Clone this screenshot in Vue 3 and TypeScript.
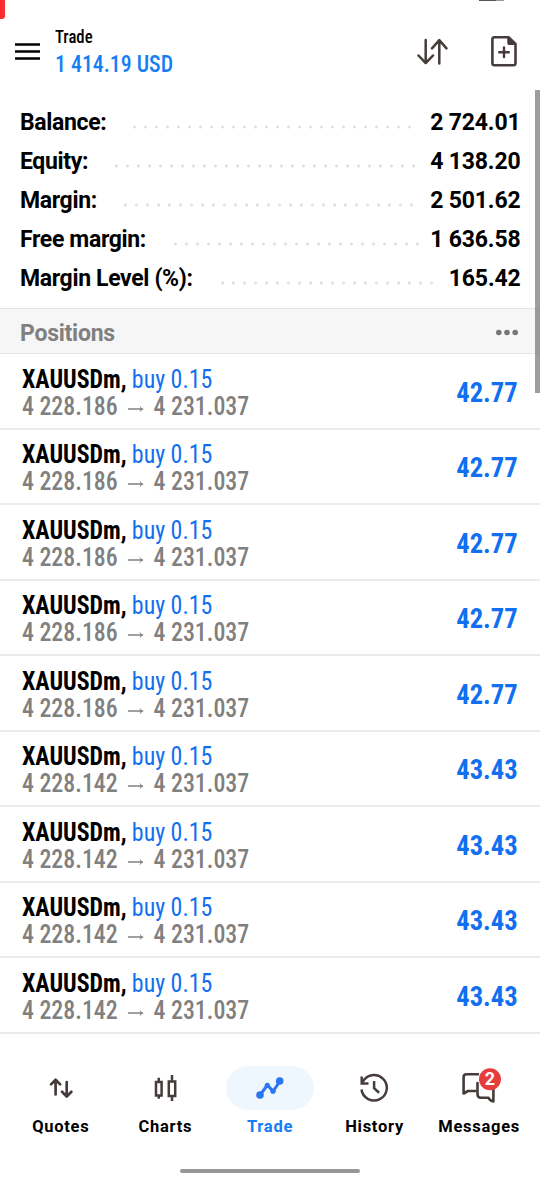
<script setup lang="ts">
interface Summary { label: string; value: string; start: number; dots: number }
interface Position { symbol: string; side: string; from: string; to: string; profit: string }

const summary: Summary[] = [
  { label: 'Balance:', value: '2 724.01', start: 129, dots: 26 },
  { label: 'Equity:', value: '4 138.20', start: 111, dots: 28 },
  { label: 'Margin:', value: '2 501.62', start: 120, dots: 27 },
  { label: 'Free margin:', value: '1 636.58', start: 170, dots: 23 },
  { label: 'Margin Level (%):', value: '165.42', start: 217, dots: 20 },
]

const positions: Position[] = Array.from({ length: 9 }, (_, i) => ({
  symbol: 'XAUUSDm,',
  side: 'buy 0.15',
  from: i < 5 ? '4 228.186' : '4 228.142',
  to: '4 231.037',
  profit: i < 5 ? '42.77' : '43.43',
}))
</script>

<template>
  <div class="screen">
    <div class="corner-mark"></div>
    <div class="notch-mark"></div>
    <header class="topbar">
      <svg class="menu" width="26" height="18" viewBox="0 0 26 18"><path d="M0 1.5H25M0 8.5H25M0 15.5H25" stroke="#000" stroke-width="2.4" /></svg>
      <div class="titles">
        <div class="title cond">Trade</div>
        <div class="amount cond">1 414.19 USD</div>
      </div>
      <svg class="sort" width="32" height="28" viewBox="0 0 32 28" fill="none" stroke="#453c3b" stroke-width="2.5" stroke-linecap="round" stroke-linejoin="round">
        <path d="M9.7 2V25M2.5 17.5L9.7 25.2L17 17.5M23.3 25.5V2.5M16 10.3L23.3 2.2L30.5 10.3" />
      </svg>
      <svg class="newdoc" width="26" height="32" viewBox="0 0 26 32" fill="none" stroke="#453c3b" stroke-width="2.6" stroke-linecap="round" stroke-linejoin="round">
        <path d="M3.5 2.2H17.5L24.5 9V28Q24.5 30.2 22.5 30.2H3.5Q1.4 30.2 1.4 28V4.3Q1.4 2.2 3.5 2.2Z" />
        <path d="M17 2.5V7.5Q17 9.3 18.8 9.3H24Z" fill="#453c3b" stroke-width="1.5" />
        <path d="M13 12.5V22M8.2 17.2H17.8" stroke-width="2.4" />
      </svg>
    </header>

    <section class="summary">
      <div v-for="s in summary" :key="s.label" class="srow">
        <span class="slabel" :style="{ width: s.start - 20 + 'px' }">{{ s.label }}</span>
        <span class="dots" :style="{ width: s.dots * 11 + 'px' }"></span>
        <span class="svalue">{{ s.value }}</span>
      </div>
    </section>

    <div class="section-head">
      <span>Positions</span>
      <svg width="24" height="8" viewBox="0 0 24 8" fill="#777"><circle cx="3.8" cy="3.5" r="2.8" /><circle cx="12" cy="3.5" r="2.8" /><circle cx="20.2" cy="3.5" r="2.8" /></svg>
    </div>

    <main class="list">
      <div v-for="(p, i) in positions" :key="i" class="row">
        <div class="info">
          <div class="line"><span class="symbol cond">{{ p.symbol }}</span><span class="side cond">{{ p.side }}</span></div>
          <div class="line prices">
            <span class="price cond">{{ p.from }}</span>
            <svg class="arrow" width="17" height="10" viewBox="0 0 17 10" fill="none" stroke="#808080" stroke-width="1.5"><path d="M0 5H15" /><path d="M12 1.5Q13.5 4 16.5 5Q13.5 6 12 8.5L13.3 5Z" fill="#808080" stroke="none" /></svg>
            <span class="price cond">{{ p.to }}</span>
          </div>
        </div>
        <span class="profit cond">{{ p.profit }}</span>
      </div>
    </main>

    <nav class="tabs">
      <div class="tab">
        <div class="icon">
          <svg width="26" height="24" viewBox="0 0 26 24" fill="none" stroke="#453c3b" stroke-width="2.7" stroke-linecap="round" stroke-linejoin="round"><path d="M7.6 18.5V4M3 8.4L7.6 3.7L12.2 8.4M18.7 6V20M14 15.8L18.7 20.5L23.4 15.8" /></svg>
        </div>
        <span>Quotes</span>
      </div>
      <div class="tab">
        <div class="icon">
          <svg width="26" height="28" viewBox="0 0 26 28" fill="none" stroke="#453c3b" stroke-width="2.5"><path d="M4 8H9.6V21.4H4ZM6.8 3.8V8M6.8 21.4V24.8M16.8 7.5H23.2V22H16.8ZM20 1V7.5M20 22V27" /></svg>
        </div>
        <span>Charts</span>
      </div>
      <div class="tab active">
        <div class="icon pill">
          <svg width="30" height="26" viewBox="0 0 30 26" fill="#2b76ee" stroke="#2b76ee"><path d="M5 20L12.5 10L18 16.5L25 6" fill="none" stroke-width="3" stroke-linejoin="round" /><circle cx="5" cy="20" r="3.8" stroke="none" /><circle cx="12.3" cy="10.3" r="2.6" stroke="none" /><circle cx="18" cy="16.2" r="2.6" stroke="none" /><circle cx="24.7" cy="6" r="3.8" stroke="none" /></svg>
        </div>
        <span>Trade</span>
      </div>
      <div class="tab">
        <div class="icon">
          <svg width="30" height="30" viewBox="0.7 0 30 30" fill="none" stroke="#453c3b" stroke-width="2.5"><path d="M3.2 9.6A12.7 12.7 0 1 1 2.2 16.5" /><path d="M2.4 3.5V10.4H9.2" /><path d="M14.8 8V15.3L19.8 19.8" /></svg>
        </div>
        <span>History</span>
      </div>
      <div class="tab">
        <div class="icon">
          <svg width="44" height="40" viewBox="0 0 44 40">
            <g fill="none" stroke="#453c3b" stroke-width="2.6" stroke-linejoin="round" stroke-linecap="round">
              <path d="M21 6.2H9.5Q6.6 6.2 6.6 9.2V25.5L11 23H18.5" />
              <path d="M20.5 15V26Q20.5 29.8 24 29.8H31.5Q33 33 36.4 33.4V21" />
            </g>
            <circle cx="33" cy="11.2" r="11" fill="#e53c3c" />
            <text x="33" y="17.2" text-anchor="middle" class="badge">2</text>
          </svg>
        </div>
        <span>Messages</span>
      </div>
    </nav>
    <div class="homebar"></div>
    <div class="scrollbar"></div>
  </div>
</template>

<style>
body { margin: 0; background: #fff; }
</style>

<style scoped>
.screen { position: relative; width: 540px; height: 1182px; overflow: hidden; background: #fff; font-family: Roboto, "Liberation Sans", sans-serif; color: #000; }
.corner-mark { position: absolute; left: 0; top: 0; width: 5px; height: 19px; background: #ff2b2e; border-bottom-right-radius: 3px; }
.notch-mark { position: absolute; left: 479px; top: 0; width: 25px; height: 1px; background: linear-gradient(90deg, #555 68%, #999 68%); }
.cond { font-stretch: 75%; white-space: nowrap; }
.topbar { display: flex; height: 102px; box-sizing: border-box; padding: 25px 23px 0 15px; align-items: flex-start; }
.menu { margin-top: 18px; }
.titles { margin-left: 14px; flex: 1; }
.title, .amount { transform: scaleX(0.93); transform-origin: left; }
.title { font-size: 18px; line-height: 23px; font-weight: 500; }
.amount { font-size: 23.5px; line-height: 33px; color: #167ff5; font-weight: 500; }
.sort { margin-top: 13px; }
.newdoc { margin-left: 43px; margin-top: 10px; }
.srow { display: flex; height: 39px; padding: 0 19.5px 0 20px; line-height: 41px; font-size: 23px; font-weight: 700; white-space: nowrap; }
.slabel { letter-spacing: -0.35px; }
.dots { background: radial-gradient(circle at 5.5px 25px, #e2e2e2 1.2px, transparent 1.9px) 0 0 / 11px 39px repeat-x; }
.svalue { margin-left: auto; letter-spacing: -0.15px; }
.section-head { display: flex; justify-content: space-between; align-items: center; height: 46px; margin-top: 11px; box-sizing: border-box; padding: 4px 21px 0 20px; background: #f6f6f6; border-top: 1px solid #e5e5e5; border-bottom: 1px solid #e5e5e5; font-size: 23px; font-weight: 700; color: #808080; letter-spacing: -0.25px; }
.row { display: flex; justify-content: space-between; height: 75.5px; box-sizing: border-box; padding: 11.9px 22px 0 22px; border-bottom: 2px solid #ebebeb; }
.line { display: flex; height: 27px; line-height: 27px; font-size: 25px; transform: scaleX(0.955); transform-origin: left; }
.symbol { font-weight: 700; }
.side { font-weight: 400; color: #116ff0; margin-left: 5.5px; }
.price { font-weight: 500; color: #808080; }
.arrow { margin: 11px 9.5px 0 11px; }
.profit { font-size: 28px; line-height: 53px; font-weight: 700; color: #116ff0; transform: scaleX(0.95); transform-origin: right; }
.tabs { display: flex; margin-top: 32px; padding: 0 8.5px; }
.tab { flex: 1; display: flex; flex-direction: column; align-items: center; font-size: 16.5px; font-weight: 700; letter-spacing: 0.72px; line-height: 34px; }
.icon { width: 88px; height: 44px; display: flex; align-items: center; justify-content: center; }
.pill { background: #eff7fe; border-radius: 22px; }
.active { color: #137cf7; }
.badge { font-size: 18px; font-weight: 700; fill: #fff; letter-spacing: 0; }
.homebar { position: absolute; left: 180px; top: 1169px; width: 180px; height: 4px; border-radius: 2px; background: #979797; }
.scrollbar { position: absolute; right: 0; top: 90px; width: 5.5px; height: 303px; background: rgba(112, 108, 120, 0.68); }
</style>
